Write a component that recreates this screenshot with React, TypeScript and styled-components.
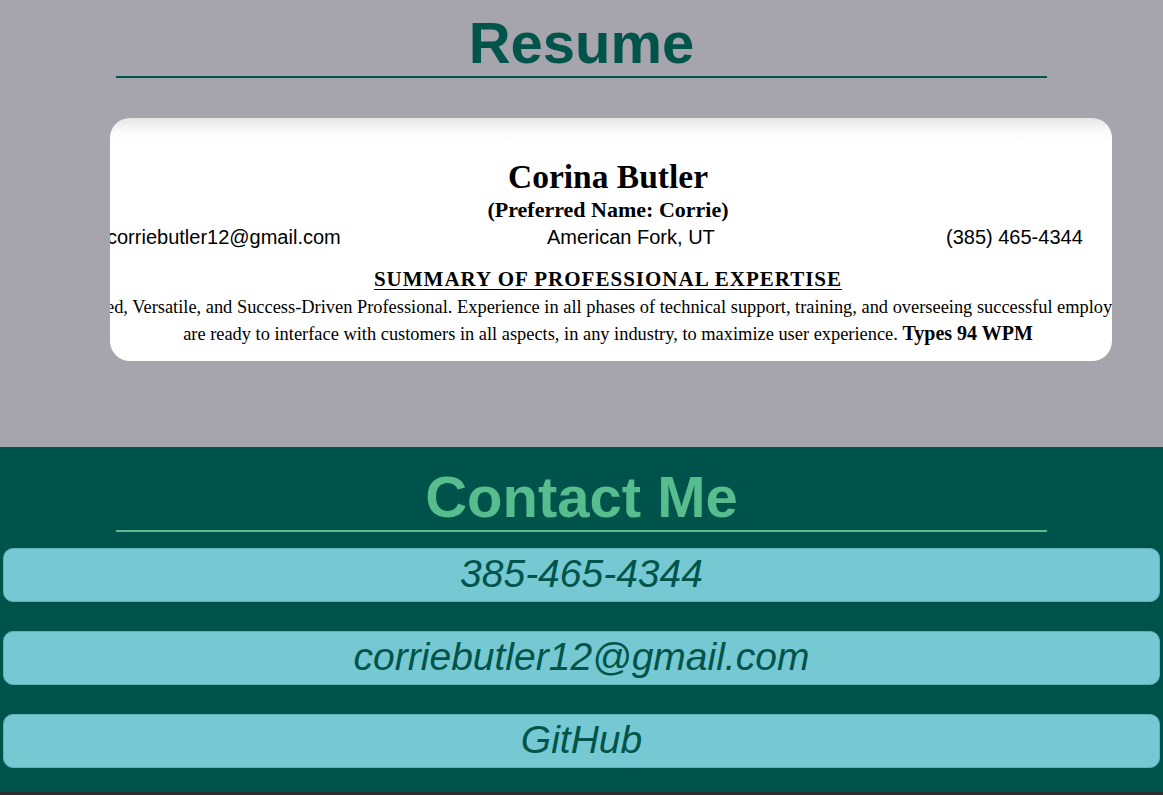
import React from "react";
import styled, { createGlobalStyle } from "styled-components";

const GlobalStyle = createGlobalStyle`
  html, body {
    margin: 0;
    padding: 0;
    background: #2e2e30;
  }
  body {
    font-family: "Liberation Sans", Arial, sans-serif;
  }
  * { box-sizing: border-box; }
`;

const ResumeSection = styled.section`
  background: #a6a5ae;
  padding: 9px 0 86px;
`;

const SectionTitle = styled.h1<{ $color: string }>`
  width: 80%;
  margin: 0 auto;
  font-family: "Liberation Sans", Arial, sans-serif;
  font-size: 58px;
  font-weight: 700;
  line-height: 67px;
  text-align: center;
  color: ${(p) => p.$color};
  border-bottom: 2px solid ${(p) => p.$color};
`;

const Card = styled.div`
  margin: 40px 0 0 110px;
  width: 1002px;
  height: 243px;
  border-radius: 20px;
  overflow: hidden;
  background: linear-gradient(#e6e6e6 0px, #fbfbfb 14px, #ffffff 26px);
  padding-top: 41px;
  display: flex;
  flex-direction: column;
  align-items: center;
  color: #000;
  font-family: "Liberation Serif", "Times New Roman", serif;
`;

const Name = styled.div`
  font-size: 33.5px;
  font-weight: 700;
  line-height: 36px;
  margin-left: -6px;
`;

const Preferred = styled.div`
  font-size: 22px;
  font-weight: 700;
  line-height: 29px;
  margin-left: -6px;
`;

const ContactRow = styled.div`
  align-self: flex-start;
  margin-left: -3px;
  display: grid;
  grid-template-columns: 440px 399px auto;
  font-family: "Liberation Sans", Arial, sans-serif;
  font-size: 20px;
  line-height: 26px;
  white-space: nowrap;
`;

const Summary = styled.div`
  margin-top: 15px;
  font-size: 21px;
  font-weight: 700;
  line-height: 29px;
  letter-spacing: 1px;
  text-decoration: underline;
  text-decoration-thickness: 1px;
  text-underline-offset: 3px;
  margin-left: -6px;
`;

const Para = styled.div<{ $clipLeft?: boolean }>`
  font-size: 18.4px;
  line-height: 26px;
  white-space: nowrap;
  ${(p) => (p.$clipLeft ? "align-self: flex-start; margin-left: -4px;" : "margin-left: -6px;")}
`;

const Strong = styled.b`
  font-size: 20px;
`;

const ContactSection = styled.section`
  background: #00534a;
  padding: 16px 0 24px;
`;

const LinkList = styled.div`
  display: flex;
  flex-direction: column;
  gap: 29px;
  margin-top: 16px;
  padding: 0 3px;
`;

const ContactLink = styled.a`
  display: block;
  height: 54px;
  border: 1px solid #5fb1b8;
  border-radius: 10px;
  background: #76c9d3;
  color: #00544a;
  text-align: center;
  text-decoration: none;
  font-family: "Liberation Sans", Arial, sans-serif;
  font-style: italic;
  font-size: 39px;
  line-height: 50px;
`;

export default function App() {
  return (
    <>
      <GlobalStyle />
      <ResumeSection>
        <SectionTitle $color="#00544a">Resume</SectionTitle>
        <Card>
          <Name>Corina Butler</Name>
          <Preferred>(Preferred Name: Corrie)</Preferred>
          <ContactRow>
            <span>corriebutler12@gmail.com</span>
            <span>American Fork, UT</span>
            <span>(385) 465-4344</span>
          </ContactRow>
          <Summary>SUMMARY OF PROFESSIONAL EXPERTISE</Summary>
          <Para $clipLeft>
            ed, Versatile, and Success-Driven Professional. Experience in all phases of technical support, training, and overseeing successful employees
          </Para>
          <Para>
            are ready to interface with customers in all aspects, in any industry, to maximize user experience. <Strong>Types 94 WPM</Strong>
          </Para>
        </Card>
      </ResumeSection>
      <ContactSection>
        <SectionTitle as="h2" $color="#57bd8e">Contact Me</SectionTitle>
        <LinkList>
          <ContactLink href="#">385-465-4344</ContactLink>
          <ContactLink href="#">corriebutler12@gmail.com</ContactLink>
          <ContactLink href="#">GitHub</ContactLink>
        </LinkList>
      </ContactSection>
    </>
  );
}
